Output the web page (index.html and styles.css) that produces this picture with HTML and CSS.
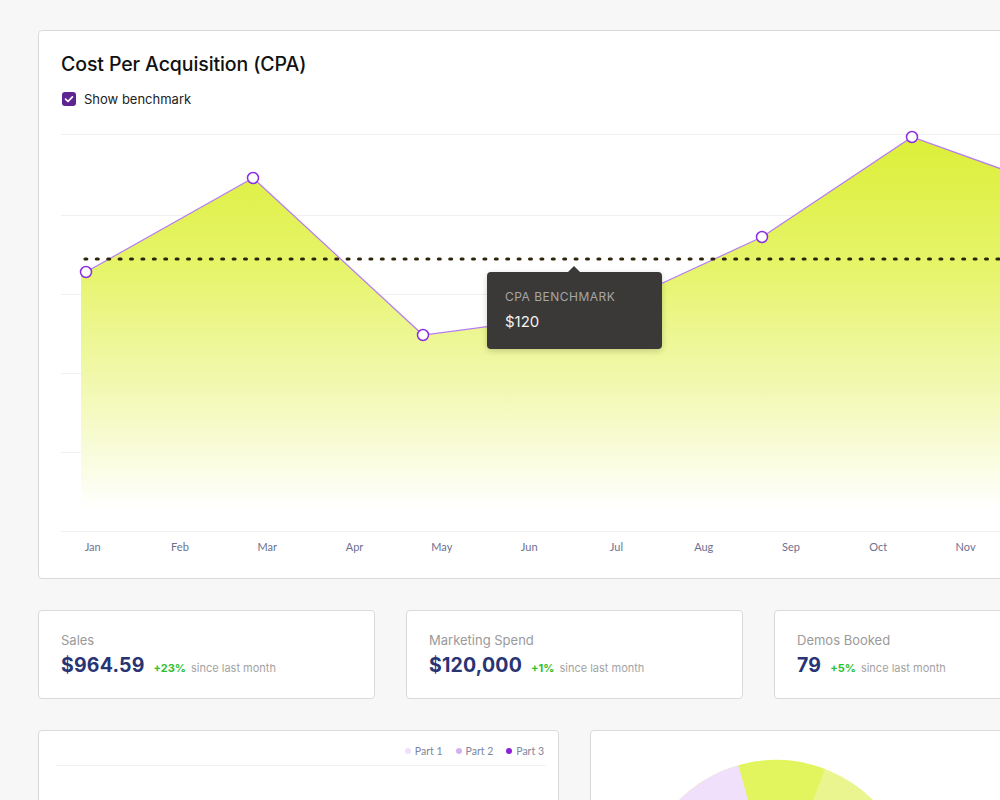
FILE: index.html
```html
<!DOCTYPE html>
<html>
<head>
<meta charset="utf-8">
<link rel="stylesheet" href="styles.css">
</head>
<body>
<div class="page">
  <section class="card main-card">
    <h2 class="title">Cost Per Acquisition (CPA)</h2>
    <label class="check-row">
      <span class="checkbox">
        <svg viewBox="0 0 14 14" width="14" height="14"><path d="M3.6 7.2 L6 9.5 L10.4 4.8" fill="none" stroke="#fff" stroke-width="1.7" stroke-linecap="round" stroke-linejoin="round"/></svg>
      </span>
      <span class="check-label">Show benchmark</span>
    </label>
    <div class="chart">
      <svg class="chart-svg" width="1027" height="420" viewBox="0 0 1027 420">
        <defs>
          <linearGradient id="fillGrad" x1="0" y1="17" x2="0" y2="390" gradientUnits="userSpaceOnUse">
            <stop offset="0" stop-color="#dcef38"/>
            <stop offset="0.35" stop-color="#e6f46a"/>
            <stop offset="0.7" stop-color="#f3f9b8"/>
            <stop offset="1" stop-color="#ffffff"/>
          </linearGradient>
        </defs>
        <g stroke="#f0f0f0" stroke-width="1">
          <line x1="0" y1="14.5" x2="1027" y2="14.5"/>
          <line x1="0" y1="95.5" x2="1027" y2="95.5"/>
          <line x1="0" y1="174.5" x2="1027" y2="174.5"/>
          <line x1="0" y1="253.5" x2="1027" y2="253.5"/>
          <line x1="0" y1="332.5" x2="1027" y2="332.5"/>
          <line x1="0" y1="411.5" x2="1027" y2="411.5"/>
        </g>
        <path d="M20 155 L25 152 L192 58 L362 215 L539 192 L701 117 L851 17 L1027 80 L1027 392 L20 392 Z" fill="url(#fillGrad)"/>
        <path d="M20 155 L25 152 L192 58 L362 215 L539 192 L701 117 L851 17 L1027 80" fill="none" stroke="#b57cf2" stroke-width="1.2"/>
        <g fill="#fff" stroke="#8b2fe0" stroke-width="1.5">
          <circle cx="25" cy="152" r="5.5"/>
          <circle cx="192" cy="58" r="5.5"/>
          <circle cx="362" cy="215" r="5.5"/>
          <circle cx="539" cy="192" r="5.5"/>
          <circle cx="701" cy="117" r="5.5"/>
          <circle cx="851" cy="17" r="5.5"/>
        </g>
        <line x1="24" y1="139" x2="1027" y2="139" stroke="#2e240c" stroke-width="3.2" stroke-linecap="round" stroke-dasharray="1.8 9.6"/>
      </svg>
      <div class="tooltip">
        <div class="tip-title">CPA BENCHMARK</div>
        <div class="tip-value">$120</div>
      </div>
    </div>
    <div class="x-axis">
      <span>Jan</span><span>Feb</span><span>Mar</span><span>Apr</span><span>May</span><span>Jun</span><span>Jul</span><span>Aug</span><span>Sep</span><span>Oct</span><span>Nov</span>
    </div>
  </section>

  <div class="stats">
    <div class="card stat">
      <div class="stat-label">Sales</div>
      <div class="stat-row"><span class="stat-value">$964.59</span><span class="stat-change">+23%</span><span class="stat-since">since last month</span></div>
    </div>
    <div class="card stat">
      <div class="stat-label">Marketing Spend</div>
      <div class="stat-row"><span class="stat-value">$120,000</span><span class="stat-change">+1%</span><span class="stat-since">since last month</span></div>
    </div>
    <div class="card stat">
      <div class="stat-label">Demos Booked</div>
      <div class="stat-row"><span class="stat-value">79</span><span class="stat-change">+5%</span><span class="stat-since">since last month</span></div>
    </div>
  </div>

  <div class="bottom">
    <div class="card bar-card">
      <div class="legend">
        <span class="legend-item"><span class="dot dot1"></span>Part 1</span>
        <span class="legend-item"><span class="dot dot2"></span>Part 2</span>
        <span class="legend-item"><span class="dot dot3"></span>Part 3</span>
      </div>
      <div class="grid-line"></div>
    </div>
    <div class="card pie-card">
      <svg class="pie" width="483" height="300" viewBox="0 0 483 300">
        <circle cx="185" cy="167" r="138" fill="#ebf590"/>
        <path d="M185 167 L147.4 34.3 A138 138 0 0 0 47 167 Z" fill="#f0e0fb"/>
        <path d="M185 167 L147.4 34.3 A138 138 0 0 1 234 38 Z" fill="#e2f55f"/>
      </svg>
    </div>
  </div>
</div>
</body>
</html>
```

FILE: styles.css
```css
html, body {
  margin: 0;
  padding: 0;
  background: #f7f7f7;
  overflow: hidden;
  font-family: "Inter", "Liberation Sans", sans-serif;
}

.page {
  width: 1073px;
  padding: 30px 0 0 38px;
}

.card {
  background: #fff;
  border: 1px solid #dadada;
  border-radius: 4px;
  box-sizing: border-box;
}

.main-card {
  padding: 21px 22px 24px 22px;
}

.title {
  margin: 0;
  font-size: 19.5px;
  line-height: 24px;
  font-weight: 500;
  color: #111;
  letter-spacing: -0.1px;
}

.check-row {
  display: flex;
  align-items: center;
  gap: 8px;
  margin-top: 14px;
  height: 18px;
}

.checkbox {
  width: 14px;
  height: 14px;
  border-radius: 3px;
  background: #5e2490;
  display: flex;
  margin-left: 1px;
}

.check-label {
  font-size: 13px;
  color: #222;
}

.chart {
  position: relative;
  margin-top: 12px;
  height: 420px;
}

.chart-svg {
  display: block;
}

.tooltip {
  position: absolute;
  left: 426px;
  top: 152px;
  width: 175px;
  height: 77px;
  box-sizing: border-box;
  padding: 17px 18px;
  background: #3a3937;
  border-radius: 4px;
  box-shadow: 0 2px 6px rgba(0, 0, 0, 0.18);
}

.tooltip::before {
  content: "";
  position: absolute;
  top: -6px;
  left: 81px;
  border-left: 6px solid transparent;
  border-right: 6px solid transparent;
  border-bottom: 6px solid #3a3937;
}

.tip-title {
  font-size: 12px;
  line-height: 16px;
  color: #a6a6a6;
  letter-spacing: 0.5px;
}

.tip-value {
  margin-top: 7px;
  font-size: 15px;
  line-height: 20px;
  color: #f2f2f2;
}

.x-axis {
  display: grid;
  grid-template-columns: repeat(11, 87.3px);
  margin-left: -12px;
  height: 14px;
  font-family: "Lato", "Liberation Sans", sans-serif;
  font-size: 11px;
  line-height: 14px;
  color: #6c7190;
}

.x-axis span {
  text-align: center;
}

.stats {
  display: grid;
  grid-template-columns: repeat(3, 337px);
  gap: 31px;
  margin-top: 31px;
}

.stat {
  height: 89px;
  padding: 20px 22px 18px 22px;
}

.stat-label {
  font-size: 13px;
  line-height: 18px;
  color: #9a9a9a;
}

.stat-row {
  display: flex;
  align-items: baseline;
  margin-top: 2px;
  height: 28px;
  line-height: 28px;
}

.stat-value {
  font-size: 19.5px;
  font-weight: 700;
  color: #283474;
  letter-spacing: 0.2px;
}

.stat-change {
  margin-left: 9px;
  font-size: 11px;
  font-weight: 700;
  color: #2cc12f;
}

.stat-since {
  margin-left: 5px;
  font-size: 11px;
  color: #a3a3a3;
}

.bottom {
  display: grid;
  grid-template-columns: repeat(2, 521px);
  gap: 31px;
  margin-top: 31px;
}

.bar-card {
  height: 200px;
  padding: 14px 12px 0 17px;
}

.legend {
  display: flex;
  justify-content: flex-end;
  gap: 13px;
  margin-right: 2px;
  font-family: "Lato", "Liberation Sans", sans-serif;
  font-size: 10.5px;
  line-height: 12px;
  color: #80859e;
}

.legend-item {
  display: flex;
  align-items: center;
  gap: 4px;
}

.dot {
  width: 6px;
  height: 6px;
  border-radius: 50%;
}

.dot1 { background: #efdffb; }
.dot2 { background: #d3b2f3; }
.dot3 { background: #8a22d8; }

.grid-line {
  margin-top: 8px;
  height: 1px;
  background: #f2f2f2;
}

.pie-card {
  height: 200px;
  overflow: hidden;
}

.pie {
  display: block;
}
```
